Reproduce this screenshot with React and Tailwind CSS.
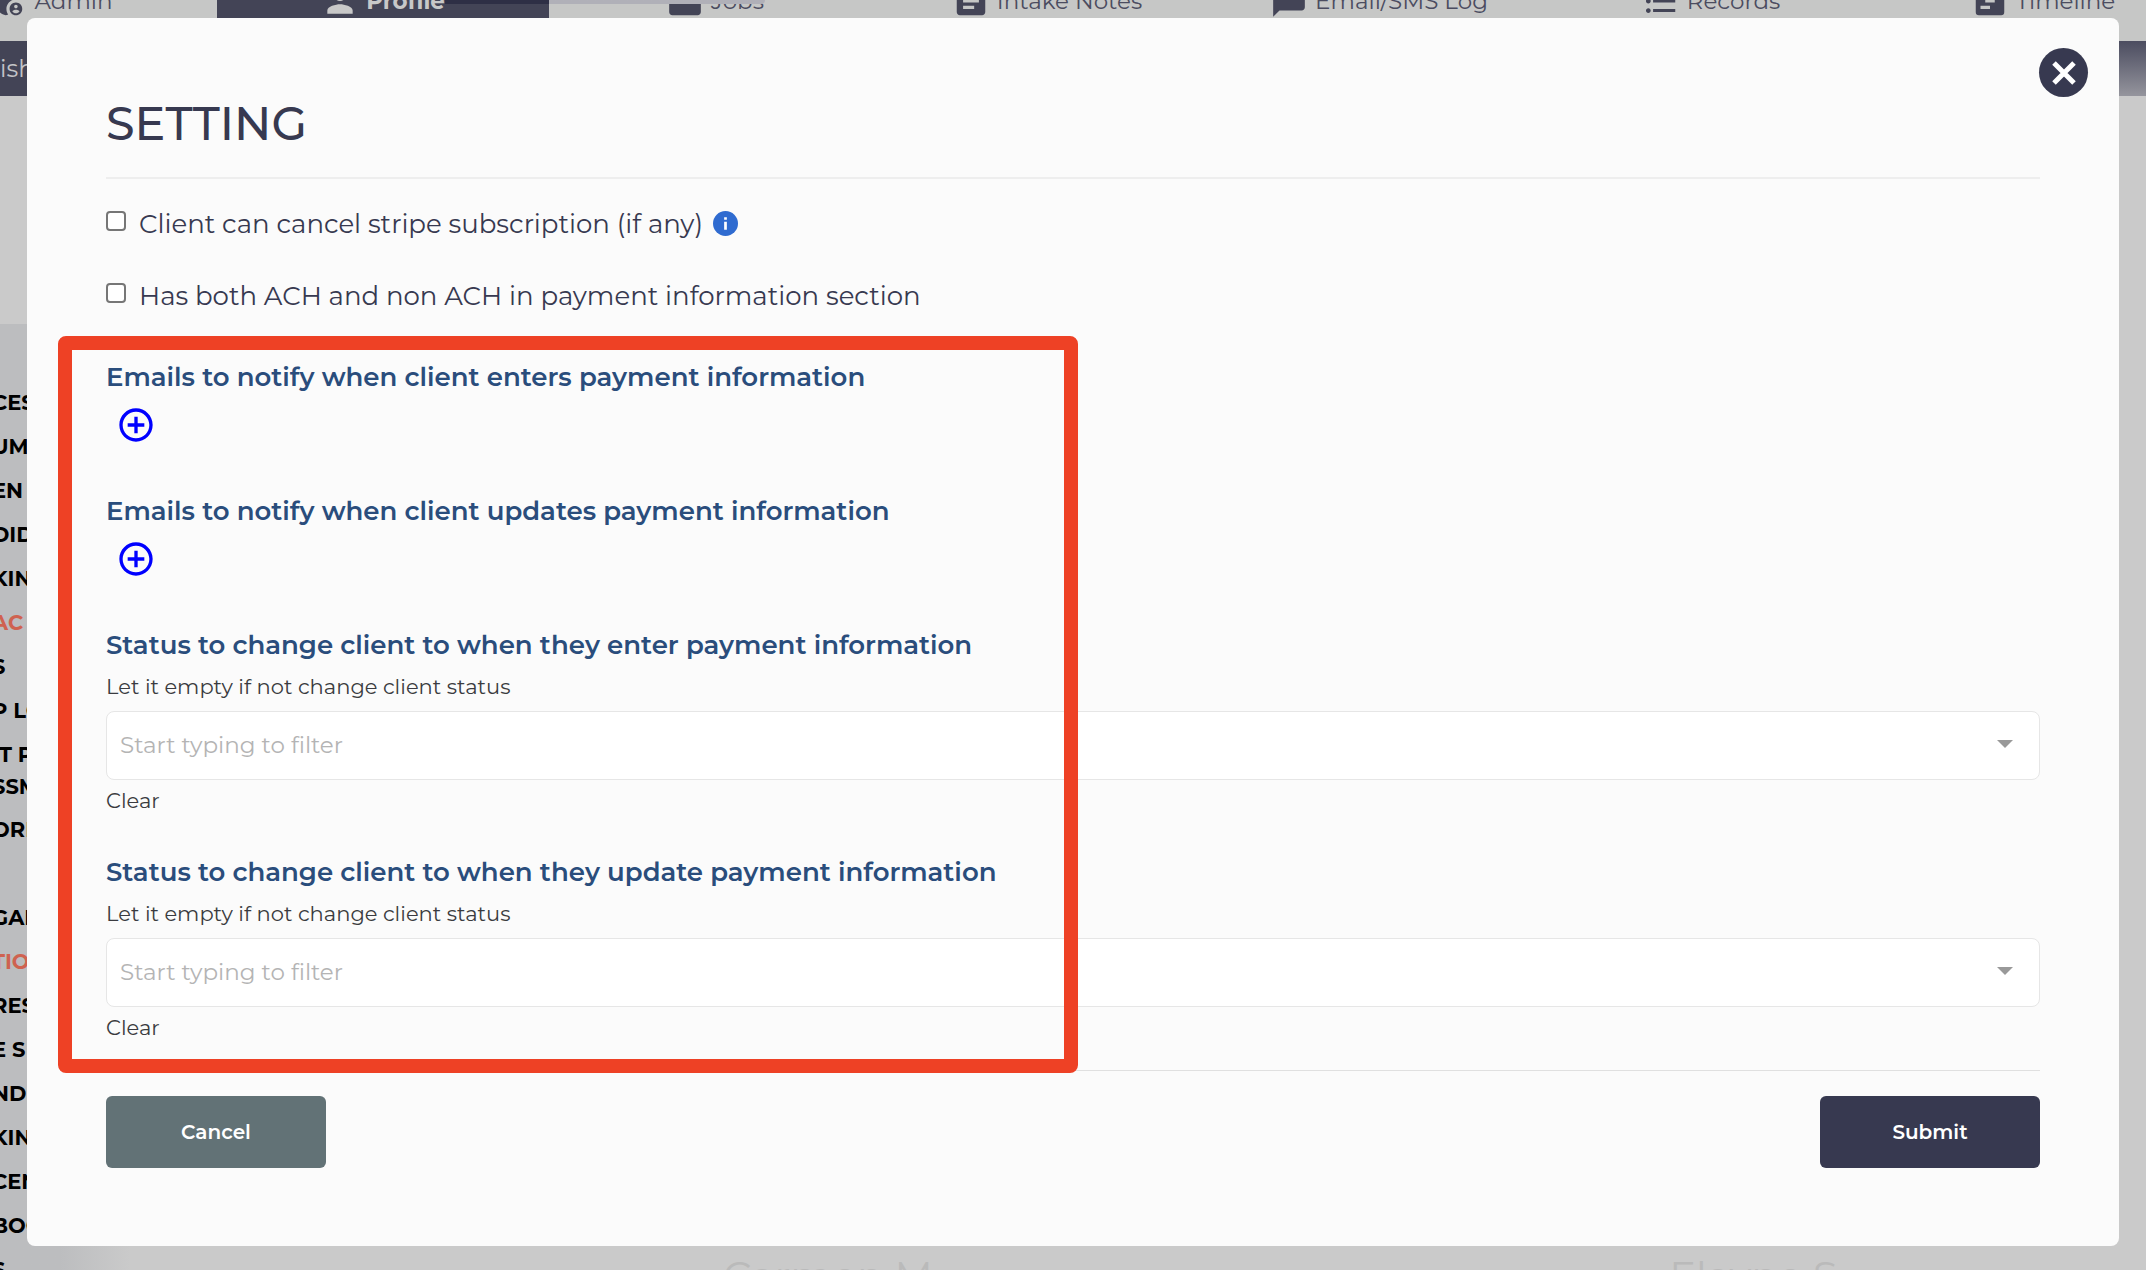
import React from "react";
import {
  MdAddCircleOutline,
  MdAdminPanelSettings,
  MdArticle,
  MdChatBubble,
  MdFormatListBulleted,
  MdPerson,
  MdWork,
} from "react-icons/md";

function TimelineIcon({ className }) {
  return (
    <svg viewBox="0 0 24 24" fill="currentColor" className={className} aria-hidden="true">
      <path
        fillRule="evenodd"
        d="M5 3h14a2 2 0 0 1 2 2v14a2 2 0 0 1-2 2H5a2 2 0 0 1-2-2V5a2 2 0 0 1 2-2zM12 7v2h6V7zM9 11v2h6v-2zM6 15v2h6v-2z"
      />
    </svg>
  );
}

const TABS = [
  { label: "Admin", Icon: MdAdminPanelSettings },
  { label: "Profile", Icon: MdPerson, active: true },
  { label: "Jobs", Icon: MdWork },
  { label: "Intake Notes", Icon: MdArticle },
  { label: "Email/SMS Log", Icon: MdChatBubble },
  { label: "Records", Icon: MdFormatListBulleted },
  { label: "Timeline", Icon: TimelineIcon },
];

const SIDE_LINKS = [
  { label: "CES" },
  { label: "UME" },
  { label: "EN" },
  { label: "DID" },
  { label: "KIN" },
  { label: "AC", accent: true },
  { label: "S" },
  { label: "P LO" },
  { label: "IT P", second: "SSM" },
  { label: "ORE" },
  { label: "" },
  { label: "GAI" },
  { label: "TIO", accent: true },
  { label: "RES" },
  { label: "E S" },
  { label: "NDI" },
  { label: "KIN" },
  { label: "CEN" },
  { label: "BOO" },
  { label: "S" },
];

function PageBehind() {
  return (
    <div className="flex h-screen flex-col overflow-hidden bg-[#cacaca]">
      <nav className="-mt-[39px] -mr-[63px] -ml-[115px] grid h-20 shrink-0 grid-cols-7 bg-[#c6c7c6] text-[23px] text-[#4b4c60]">
        {TABS.map(({ label, Icon, active }) => (
          <a
            key={label}
            href="#"
            className={
              active
                ? "flex items-center justify-center gap-[7px] bg-[#434456] font-bold text-[#c8c8c8]"
                : "flex items-center justify-center gap-[7px]"
            }
          >
            <Icon className={active ? "size-[38px] shrink-0" : "size-[38px] shrink-0 text-[#434456]"} />
            {label}
          </a>
        ))}
      </nav>
      <div className="absolute top-0 left-[445px] h-1 w-80 rounded-br bg-linear-to-r from-[#2e2f45] from-[104px] to-[#b0b0b8] to-[104px]" />
      <div className="flex h-[55px] shrink-0 items-center justify-between bg-[#434456] text-2xl text-[#c4c4c8]">
        <span>ish</span>
        <span className="h-full w-12 bg-linear-to-b from-[#4c4d60] to-[#95959d]" />
      </div>
      <div className="flex min-h-0 flex-1 flex-col pt-[228px]">
        <div className="flex min-h-0 flex-1 bg-linear-to-r from-[#bcbdbf] from-[60px] to-[#cacaca] to-[130px]">
          <ul className="-ml-2 w-[84px] overflow-hidden pt-[57px] text-[21px] font-bold whitespace-nowrap text-black">
            {SIDE_LINKS.map(({ label, second, accent }, i) => (
              <li
                key={i}
                className={second ? "h-[75px] pt-1.5 leading-8" : label ? "h-11 leading-[44px]" : "h-11"}
              >
                {label && (
                  <a href="#" className={accent ? "text-[#cf6250]" : ""}>
                    {label}
                    {second && <span className="block">{second}</span>}
                  </a>
                )}
              </li>
            ))}
          </ul>
          <div className="-mr-[75px] ml-[293px] grid h-[18px] flex-1 grid-cols-2 self-end text-center text-[40px] leading-[48px] text-[#bababa]">
            <span>Carmen M.</span>
            <span>Elayne S.</span>
          </div>
        </div>
      </div>
    </div>
  );
}

function CheckRow({ id, label, children }) {
  return (
    <div className="flex items-start">
      <input
        id={id}
        type="checkbox"
        className="mt-[7px] size-5 shrink-0 appearance-none rounded border-2 border-[#767676] bg-white checked:bg-[#373950]"
      />
      <label htmlFor={id} className="ml-[13px] text-[26px] leading-10 text-[#373950]">
        {label}
      </label>
      {children}
    </div>
  );
}

function EmailGroup({ title }) {
  return (
    <section className="mb-12">
      <h2 className="text-[26px] leading-9 font-semibold text-[#2a4d7c]">{title}</h2>
      <button type="button" aria-label={"Add: " + title} className="mt-2.5 ml-2.5 block text-[#0000ff]">
        <MdAddCircleOutline className="size-10" />
      </button>
    </section>
  );
}

function StatusGroup({ id, title }) {
  return (
    <section>
      <label htmlFor={id} className="block text-[26px] leading-9 font-semibold text-[#2a4d7c]">
        {title}
      </label>
      <p className="mt-2.5 text-[21px] leading-7 text-[#3a3b40]">Let it empty if not change client status</p>
      <div className="mt-2.5 flex h-[69px] items-center rounded-lg border border-[#e6e6e6] bg-white pr-[26px] pl-[13px]">
        <input
          id={id}
          type="text"
          placeholder="Start typing to filter"
          className="h-full min-w-0 flex-1 bg-transparent pb-0.5 text-[23px] text-[#3a3b40] outline-none placeholder:text-[#b4b4b4]"
        />
        <svg viewBox="0 0 16 8" className="mb-1 h-2 w-4 shrink-0 text-[#999999]" aria-hidden="true">
          <path d="M0 0h16L8 8z" fill="currentColor" />
        </svg>
      </div>
      <button type="button" className="mt-[7px] block text-[21px] leading-7 text-[#3a3b40]">
        Clear
      </button>
    </section>
  );
}

export default function App() {
  return (
    <div className="relative font-['Montserrat','Inter',sans-serif]">
      <PageBehind />

      <div
        role="dialog"
        aria-modal="true"
        aria-labelledby="setting-title"
        className="absolute inset-x-[27px] top-[18px] rounded-lg bg-[#fbfbfb] px-[79px] pt-[78px] pb-[78px]"
      >
        <button
          type="button"
          aria-label="Close"
          className="absolute top-[30px] right-[31px] flex size-[49px] items-center justify-center rounded-full bg-[#373950]"
        >
          <svg viewBox="0 0 24 24" className="size-6 text-white" fill="none" stroke="currentColor" strokeWidth="5" aria-hidden="true">
            <path d="M2 2l20 20M22 2L2 22" />
          </svg>
        </button>

        <header className="border-b-2 border-[#eeeeee] pb-[25px]">
          <h1 id="setting-title" className="text-[46px] leading-[56px] font-medium text-[#373950]">
            SETTING
          </h1>
        </header>

        <div className="flex flex-col gap-8 pt-[25px]">
          <CheckRow id="cancel-sub" label="Client can cancel stripe subscription (if any)">
            <svg viewBox="0 0 24 24" className="mt-[7px] ml-2.5 size-[25px] shrink-0" aria-label="More information">
              <circle cx="12" cy="12" r="12" fill="#2f6bd0" />
              <path d="M10.7 6h2.6v2.4h-2.6zM10.7 10.2h2.6V18h-2.6z" fill="#fff" />
            </svg>
          </CheckRow>
          <CheckRow id="ach" label="Has both ACH and non ACH in payment information section" />
        </div>

        <div className="relative mt-[43px]">
          <EmailGroup title="Emails to notify when client enters payment information" />
          <EmailGroup title="Emails to notify when client updates payment information" />
          <div className="flex flex-col gap-[39px]">
            <StatusGroup id="status-enter" title="Status to change client to when they enter payment information" />
            <StatusGroup id="status-update" title="Status to change client to when they update payment information" />
          </div>
          <div className="pointer-events-none absolute -top-[23px] -bottom-[31px] -left-12 w-[1020px] rounded-lg border-[14px] border-[#ee4125]" />
        </div>

        <footer className="mt-7 flex justify-between border-t border-[#e0e0e0] pt-[25px] text-xl font-semibold text-white">
          <button type="button" className="h-[72px] w-[220px] rounded-md bg-[#627276]">
            Cancel
          </button>
          <button type="button" className="h-[72px] w-[220px] rounded-md bg-[#373950]">
            Submit
          </button>
        </footer>
      </div>
    </div>
  );
}
